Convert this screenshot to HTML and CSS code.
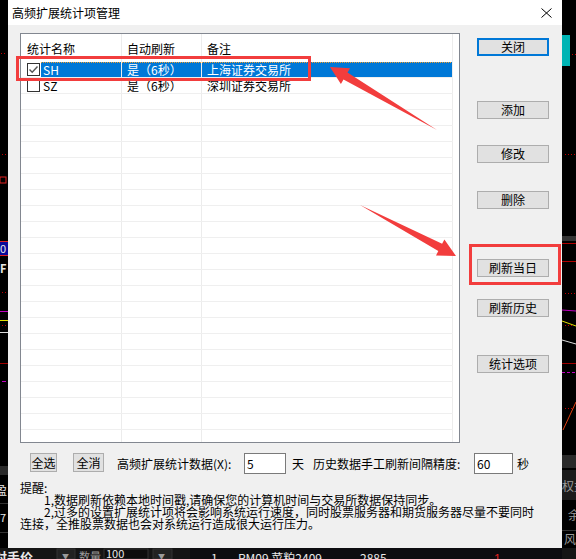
FILE: index.html
```html
<!DOCTYPE html>
<html lang="zh-CN">
<head>
<meta charset="utf-8">
<title>高频扩展统计项管理</title>
<link rel="stylesheet" href="styles.css">
</head>
<body>
<div class="desktop">
  <svg class="backdrop" width="576" height="559" viewBox="0 0 576 559">
    <rect x="0" y="0" width="576" height="559" fill="#000"/>
    <!-- left strip -->
    <g fill="#c00000">
      <rect x="1" y="53" width="1" height="1"/><rect x="4" y="53" width="1" height="1"/>
      <rect x="2" y="154" width="1" height="1"/><rect x="5" y="154" width="1" height="1"/>
      <rect x="2" y="292" width="1" height="1"/><rect x="5" y="292" width="1" height="1"/>
      <rect x="2" y="325" width="1" height="1"/><rect x="5" y="325" width="1" height="1"/>
    </g>
    <rect x="0" y="177" width="6" height="6" fill="none" stroke="#e02020" stroke-width="1"/>
    <rect x="0" y="242" width="8" height="13" fill="#0a0a9a"/>
    <rect x="0" y="241" width="8" height="1" fill="#e02020"/>
    <rect x="0" y="255" width="8" height="1" fill="#e02020"/>
    <text x="0" y="253" class="bk-white" font-size="11">0</text>
    <text x="0" y="273" class="bk-white" font-size="11" font-weight="bold">F</text>
    <rect x="0" y="311" width="8" height="1" fill="#c000c0"/>
    <rect x="0" y="320" width="8" height="1" fill="#e0e000"/>
    <rect x="0" y="332" width="8" height="1" fill="#dddddd"/>
    <rect x="0" y="363" width="8" height="1" fill="#a00000"/>
    <rect x="2" y="381" width="4" height="1" fill="#c000c0"/>
    <rect x="0" y="466" width="8" height="9" fill="#2a2a2a"/>
    <text x="-5" y="495" class="bk-white" font-size="12">盈</text>
    <rect x="0" y="503" width="8" height="1" fill="#333"/>
    <text x="0" y="522" class="bk-white" font-size="11">7</text>
    <rect x="0" y="532" width="8" height="1" fill="#333"/>
    <!-- right strip -->
    <rect x="562" y="35" width="8" height="31" fill="#00b4b4"/>
    <g fill="#c00000">
      <rect x="572" y="54" width="1" height="1"/><rect x="575" y="54" width="1" height="1"/>
      <rect x="565" y="154" width="1" height="1"/><rect x="568" y="154" width="1" height="1"/><rect x="571" y="154" width="1" height="1"/><rect x="574" y="154" width="1" height="1"/>
      <rect x="565" y="293" width="1" height="1"/><rect x="568" y="293" width="1" height="1"/><rect x="571" y="293" width="1" height="1"/><rect x="574" y="293" width="1" height="1"/>
      <rect x="565" y="325" width="1" height="1"/><rect x="568" y="325" width="1" height="1"/><rect x="571" y="325" width="1" height="1"/>
      <rect x="565" y="408" width="1" height="1"/><rect x="568" y="408" width="1" height="1"/><rect x="571" y="408" width="1" height="1"/>
    </g>
    <rect x="562" y="236" width="14" height="5" fill="#333"/>
    <rect x="562" y="243" width="14" height="1" fill="#b00000"/>
    <rect x="562" y="261" width="14" height="1" fill="#b00000"/>
    <line x1="562" y1="310" x2="576" y2="311" stroke="#c000c0"/>
    <line x1="562" y1="321" x2="576" y2="326" stroke="#e0e000"/>
    <line x1="562" y1="340" x2="576" y2="344" stroke="#dddddd"/>
    <rect x="562" y="363" width="14" height="1" fill="#a00000"/>
    <line x1="562" y1="372.5" x2="576" y2="372.5" stroke="#c000c0" stroke-dasharray="3 2"/>
    <line x1="563" y1="430" x2="576" y2="402" stroke="#e04010"/>
    <rect x="562" y="455" width="14" height="13" fill="#2a2a2a"/>
    <rect x="562" y="470" width="14" height="30" fill="#1c1c1c"/>
    <text x="562" y="491" class="bk-gray" font-size="12">权益</text>
    <text x="568" y="520" class="bk-gray" font-size="12">余</text>
    <rect x="562" y="530" width="14" height="1" fill="#333"/>
    <text x="564" y="544" class="bk-gray" font-size="12">风</text>
    <!-- bottom strip -->
    <rect x="0" y="548" width="576" height="11" fill="#151515"/>
    <text x="-6" y="562" class="bk-white" font-size="13" font-weight="bold">对手价</text>
    <rect x="57" y="549" width="18" height="10" fill="#222" stroke="#333"/>
    <text x="62" y="559" class="bk-gray" font-size="7">▼</text>
    <text x="79" y="561" class="bk-gray" font-size="11">数量</text>
    <rect x="104" y="549" width="44" height="10" fill="#0d0d0d" stroke="#333"/>
    <text x="106" y="558" class="bk-white" font-size="11">100</text>
    <rect x="153" y="549" width="19" height="10" fill="#222" stroke="#333"/>
    <text x="158" y="559" class="bk-gray" font-size="7">▼</text>
    <rect x="190" y="548" width="372" height="11" fill="#0c0c10"/>
    <text x="211" y="563" class="bk-white" font-size="12">1</text>
    <text x="238" y="563" class="bk-white" font-size="12">RM09 菜粕2409</text>
    <text x="360" y="563" class="bk-white" font-size="12">2885</text>
    <text x="494" y="563" fill="#e02020" font-size="12" font-family="Liberation Sans, sans-serif">1</text>
  </svg>

  <div class="dialog">
    <div class="titlebar">
      <span class="title">高频扩展统计项管理</span>
      <svg class="close" width="11" height="10" viewBox="0 0 11 10"><path d="M0.5 0.5 L10.5 9.5 M10.5 0.5 L0.5 9.5" stroke="#000" stroke-width="1" fill="none"/></svg>
    </div>
    <div class="body">
      <div class="main">
        <div class="list">
          <div class="lv-head">
            <div class="h1">统计名称</div>
            <div class="h2">自动刷新</div>
            <div class="h3">备注</div>
          </div>
          <div class="lv-rows">
            <div class="row sel">
              <div class="cb"><span class="chk"><svg width="11" height="11" viewBox="0 0 11 11"><path d="M1.5 5.5 L4.2 8.2 L9.5 2.5" stroke="#555" stroke-width="1.4" fill="none"/></svg></span></div>
              <div class="c1">SH</div>
              <div class="c2">是（6秒）</div>
              <div class="c3">上海证券交易所</div>
            </div>
            <div class="row">
              <div class="cb"><span class="chk"></span></div>
              <div class="c1">SZ</div>
              <div class="c2">是（6秒）</div>
              <div class="c3">深圳证券交易所</div>
            </div>
          </div>
        </div>
        <div class="btncol">
          <button class="btn default m1">关闭</button>
          <button class="btn m2">添加</button>
          <button class="btn m3">修改</button>
          <button class="btn m4">删除</button>
          <button class="btn m5">刷新当日</button>
          <button class="btn m6">刷新历史</button>
          <button class="btn m7">统计选项</button>
        </div>
      </div>
      <div class="controls">
        <button class="btn small w-all">全选</button>
        <button class="btn small w-none">全消</button>
        <span class="lbl lbl1">高频扩展统计数据(X):</span>
        <input class="field f1" type="text" value="5">
        <span class="lbl unit1">天</span>
        <span class="lbl lbl2">历史数据手工刷新间隔精度:</span>
        <input class="field f2" type="text" value="60">
        <span class="lbl unit2">秒</span>
      </div>
      <div class="notes">
        <div>提醒:</div>
        <div class="ind">1,数据刷新依赖本地时间戳,请确保您的计算机时间与交易所数据保持同步。</div>
        <div class="ind">2,过多的设置扩展统计项将会影响系统运行速度，同时股票服务器和期货服务器尽量不要同时</div>
        <div>连接，全推股票数据也会对系统运行造成很大运行压力。</div>
      </div>
    </div>
  </div>

  <svg class="annot" width="576" height="559" viewBox="0 0 576 559">
    <rect x="17.5" y="57.5" width="292" height="22" fill="none" stroke="#f23d3d" stroke-width="3"/>
    <rect x="470.5" y="245.5" width="89" height="38" fill="none" stroke="#f23d3d" stroke-width="3"/>
    <polygon fill="#f23d3d" points="330,67 350.1,68.3 347.5,72.6 437,130 343.5,79.5 340.9,83.9"/>
    <polygon fill="#f23d3d" points="456,256 444.4,239.6 442.1,243.7 360,205 438.3,251 436,255.4"/>
  </svg>
</div>
</body>
</html>
```

FILE: styles.css
```css
html, body {
  margin: 0;
  padding: 0;
}
body {
  width: 576px;
  height: 559px;
  overflow: hidden;
  background: #000;
  font-family: "Noto Sans CJK SC", "Noto Sans", sans-serif;
  font-size: 12px;
  color: #000;
}
.desktop {
  position: relative;
  width: 576px;
  height: 559px;
}
.backdrop {
  position: absolute;
  left: 0;
  top: 0;
  display: block;
}
.bk-white {
  fill: #e8e8e8;
  font-family: "Noto Sans CJK SC", sans-serif;
}
.bk-gray {
  fill: #9a9a9a;
  font-family: "Noto Sans CJK SC", sans-serif;
}
.dialog {
  position: absolute;
  left: 8px;
  top: 0;
  width: 554px;
  height: 548px;
  background: #f0f0f0;
  display: flex;
  flex-direction: column;
}
.titlebar {
  height: 25px;
  flex: none;
  background: #fff;
  display: flex;
  align-items: center;
  justify-content: space-between;
  padding: 0 10px 0 4px;
}
.title {
  font-size: 12px;
  line-height: 16px;
}
.close {
  display: block;
}
.body {
  padding: 8px 0 0 12px;
}
.main {
  display: flex;
  height: 410px;
}
.list {
  width: 440px;
  height: 410px;
  box-sizing: border-box;
  border: 1px solid #828790;
  background:
    linear-gradient(#ececec, #ececec) 100px 0 / 1px 100% no-repeat,
    linear-gradient(#ececec, #ececec) 180px 0 / 1px 100% no-repeat,
    linear-gradient(#ececec, #ececec) 431px 0 / 1px 100% no-repeat,
    #fff;
}
.lv-head {
  height: 28px;
  box-sizing: border-box;
  padding-top: 2px;
  line-height: 26px;
  display: flex;
  white-space: nowrap;
}
.h1 {
  width: 100px;
  padding-left: 6px;
  box-sizing: border-box;
}
.h2 {
  margin-left: 1px;
  width: 79px;
  padding-left: 5px;
  box-sizing: border-box;
}
.h3 {
  margin-left: 1px;
  padding-left: 5px;
}
.lv-rows {
  width: 432px;
  height: 380px;
  background: repeating-linear-gradient(to bottom, transparent 0, transparent 15px, #efefef 15px, #efefef 16px);
}
.row {
  display: flex;
  height: 16px;
  white-space: nowrap;
}
.row > div {
  height: 15px;
  line-height: 15px;
  box-sizing: border-box;
}
.cb {
  width: 20px;
  padding: 1px 0 0 6px;
}
.chk {
  display: flex;
  align-items: center;
  justify-content: center;
  width: 13px;
  height: 13px;
  box-sizing: border-box;
  border: 1px solid #333;
  background: #fff;
}
.chk svg {
  display: block;
}
.c1 {
  width: 80px;
  padding-left: 2px;
}
.c2 {
  margin-left: 1px;
  width: 79px;
  padding-left: 5px;
}
.c3 {
  margin-left: 1px;
  width: 250px;
  padding-left: 5px;
}
.sel .c1, .sel .c2, .sel .c3 {
  background:
    repeating-linear-gradient(to right, #f0a030 0, #f0a030 1px, transparent 1px, transparent 2px) 0 0 / 100% 1px no-repeat,
    #0078d7;
  color: #fff;
}
.btncol {
  margin-left: 17px;
  width: 72px;
  display: flex;
  flex-direction: column;
}
.btn {
  display: block;
  height: 18px;
  padding: 0;
  margin: 0;
  box-sizing: border-box;
  border: 1px solid #adadad;
  background: #e1e1e1;
  font-family: "Noto Sans CJK SC", "Noto Sans", sans-serif;
  font-size: 12px;
  line-height: 16px;
  color: #000;
  text-align: center;
  white-space: nowrap;
}
.btncol .btn {
  width: 72px;
}
.btn.default {
  border: 2px solid #0078d7;
  line-height: 14px;
}
.m1 { margin-top: 5px; }
.m2 { margin-top: 45px; }
.m3 { margin-top: 26px; }
.m4 { margin-top: 28px; }
.m5 { margin-top: 50px; }
.m6 { margin-top: 22px; }
.m7 { margin-top: 38px; }
.controls {
  display: flex;
  align-items: flex-start;
  margin-top: 10px;
  padding-left: 10px;
  height: 21px;
  white-space: nowrap;
}
.btn.small {
  height: 19px;
  line-height: 17px;
}
.w-all {
  width: 27px;
}
.w-none {
  width: 31px;
  margin-left: 16px;
}
.lbl {
  line-height: 21px;
  display: block;
}
.lbl1 {
  margin-left: 13px;
  width: 127px;
}
.field {
  display: block;
  height: 21px;
  box-sizing: border-box;
  border: 1px solid #7a7a7a;
  background: #fff;
  padding: 0 2px;
  margin: 0;
  font-family: "Noto Sans CJK SC", "Noto Sans", sans-serif;
  font-size: 12px;
  color: #000;
  outline: none;
}
.f1 {
  width: 42px;
}
.f2 {
  width: 39px;
}
.unit1 {
  margin-left: 6px;
  width: 12px;
}
.lbl2 {
  margin-left: 9px;
  width: 161px;
}
.unit2 {
  margin-left: 4px;
}
.notes {
  margin-top: 8px;
  line-height: 12px;
  white-space: nowrap;
}
.ind {
  padding-left: 24px;
}
.annot {
  position: absolute;
  left: 0;
  top: 0;
  display: block;
  pointer-events: none;
}
```
